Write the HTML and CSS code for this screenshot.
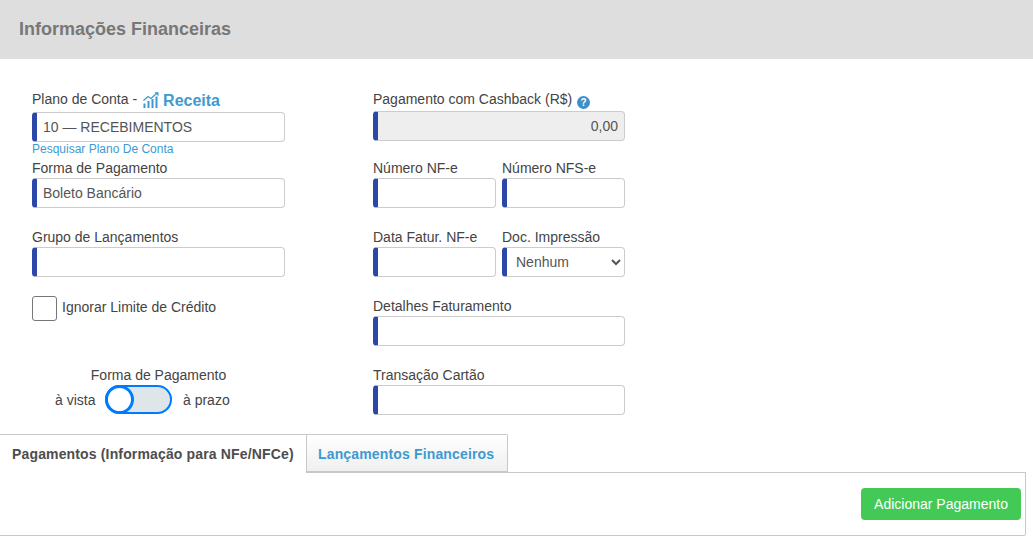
FILE: index.html
```html
<!DOCTYPE html>
<html lang="pt-BR">
<head>
<meta charset="utf-8">
<title>Informações Financeiras</title>
<link rel="stylesheet" href="styles.css">
</head>
<body>
<header class="header"><h1 class="title">Informações Financeiras</h1></header>
<main class="form">
  <div class="col col-left">
    <div class="plano">
      <label class="label plano-label"><span class="plano-text">Plano de Conta -</span>
        <svg class="trend" viewBox="0 0 16 16" width="16" height="16" aria-hidden="true">
          <path class="bars" d="M0.5 11.5h2v4.5h-2zM4.5 9h2v7h-2zM8.5 7h2v9h-2zM12.5 4.5h2V16h-2z"/>
          <path class="line" d="M0.5 8.5 5 4.5 8 6.5 14 1"/>
          <path class="bars" d="M11.5 0.2h4v4z"/>
        </svg>
        <span class="receita">Receita</span></label>
      <input class="input" type="text" value="10 — RECEBIMENTOS">
      <a class="search-link">Pesquisar Plano De Conta</a>
    </div>
    <div class="field">
      <label class="label">Forma de Pagamento</label>
      <input class="input" type="text" value="Boleto Bancário">
    </div>
    <div class="field">
      <label class="label">Grupo de Lançamentos</label>
      <input class="input" type="text">
    </div>
    <div class="check-row">
      <input class="check" type="checkbox">
      <span class="check-label">Ignorar Limite de Crédito</span>
    </div>
    <div class="switch-box">
      <div class="switch-title">Forma de Pagamento</div>
      <div class="switch-row">
        <span>à vista</span>
        <span class="switch"><span class="knob"></span></span>
        <span class="prazo">à prazo</span>
      </div>
    </div>
  </div>
  <div class="col col-right">
    <div class="field cashback">
      <label class="label">Pagamento com Cashback (R$) <span class="help">?</span></label>
      <input class="input readonly" type="text" value="0,00" readonly>
    </div>
    <div class="pair">
      <div class="field"><label class="label">Número NF-e</label><input class="input" type="text"></div>
      <div class="field"><label class="label">Número NFS-e</label><input class="input" type="text"></div>
    </div>
    <div class="pair">
      <div class="field"><label class="label">Data Fatur. NF-e</label><input class="input" type="text"></div>
      <div class="field"><label class="label">Doc. Impressão</label>
        <select class="input select"><option>Nenhum</option></select>
      </div>
    </div>
    <div class="field"><label class="label">Detalhes Faturamento</label><input class="input" type="text"></div>
    <div class="field"><label class="label">Transação Cartão</label><input class="input" type="text"></div>
  </div>
</main>
<section class="tabs-area">
  <nav class="tabs">
    <a class="tab tab-active">Pagamentos (Informação para NFe/NFCe)</a>
    <a class="tab tab-other">Lançamentos Financeiros</a>
  </nav>
  <div class="panel"><button class="add-btn" type="button">Adicionar Pagamento</button></div>
</section>
</body>
</html>
```
FILE: styles.css
```css
* { box-sizing: border-box; }
html, body { margin: 0; padding: 0; height: 545px; overflow: hidden; }
body { background: #fff; color: #444; font: 14px/20px "Liberation Sans", Arial, sans-serif; }

.header { height: 59px; background: #dedede; display: flex; align-items: center; padding: 0 0 2px 19px; }
.title { margin: 0; font-size: 18px; font-weight: bold; color: #777; line-height: 22px; }

.form { display: flex; gap: 88px; padding: 30px 0 0 32px; }
.col { width: 253px; display: flex; flex-direction: column; }
.col-right { width: 252px; gap: 19px; }

.label { display: block; height: 20px; line-height: 20px; color: #444; white-space: nowrap; }
.input {
  display: block; width: 100%; height: 30px; padding: 0 6px 0 6px;
  border: 1px solid #ccc; border-left: 5px solid #2b47a8; border-radius: 4px;
  background: #fff; color: #555; font: 14px "Liberation Sans", Arial, sans-serif; outline: none;
}
.readonly { background: #eee; text-align: right; }
.select { padding-left: 5px; }

.plano-label { display: flex; align-items: flex-start; gap: 5px; height: 23px; }
.trend { flex: none; margin: 3px 0 0 1px; }
.bars { fill: #3d9ad1; }
.line { fill: none; stroke: #3d9ad1; stroke-width: 1.3; }
.receita { color: #3d9ad1; font-size: 16px; font-weight: bold; margin: 2px 0 0 -1px; }
.search-link { display: block; height: 16px; line-height: 15px; font-size: 12px; color: #3d9ad1; }

.col-left .field { margin-bottom: 19px; }

.check-row { display: flex; align-items: flex-start; gap: 5px; height: 25px; }
.check { appearance: none; margin: 0; width: 25px; height: 25px; border: 1px solid #767676; border-radius: 3px; background: #fff; flex: none; }
.check-label { line-height: 22px; }

.switch-box { margin-top: 44px; width: 253px; }
.switch-title { height: 20px; text-align: center; }
.switch-row { display: flex; align-items: center; height: 30px; padding-left: 23px; }
.switch { display: flex; align-self: flex-start; width: 67px; height: 29px; margin: 0 11px 0 9.5px; border: 2px solid #007bff; border-radius: 15px; background: #dee6ea; }
.knob { width: 29px; height: 29px; margin: -2px 0 0 -2px; border: 3px solid #007bff; border-radius: 50%; background: #fff; }

.help {
  display: inline-block; width: 13px; height: 13px; margin-left: 1px; border-radius: 50%;
  background: #3d8fc9; color: #fff; font-size: 10px; font-weight: bold; line-height: 13px; text-align: center; vertical-align: -2px;
}
.cashback { margin-bottom: -2px; }
.cashback .label { height: 22px; }

.pair { display: grid; grid-template-columns: 123px 123px; gap: 6px; }

.tabs-area { margin-top: 19px; width: 1026px; }
.tabs { display: flex; height: 38px; }
.tab { display: flex; align-items: center; height: 39px; font-size: 14px; font-weight: bold; letter-spacing: 0.15px; border: 1px solid #c8c8c8; border-bottom: 0; }
.tab-active { width: 307px; padding-left: 12px; color: #4d4d4d; background: #fff; border-left: 0; position: relative; z-index: 1; }
.tab-other { width: 202px; margin-left: -1px; padding-left: 11px; height: 38px; color: #3d9ad1; background: linear-gradient(#fff, #efefef); border-radius: 0 2px 0 0; box-shadow: inset 0 -1px #c8c8c8; }
.panel { height: 64px; display: flex; justify-content: flex-end; align-items: flex-start; padding: 15px 4px 0 0; border: 1px solid #c8c8c8; border-left: 0; border-radius: 0 0 2px 0; }
.add-btn { width: 160px; height: 32px; border: 0; border-radius: 4px; background: #42c956; color: #fff; font: 14px "Liberation Sans", Arial, sans-serif; }
```
